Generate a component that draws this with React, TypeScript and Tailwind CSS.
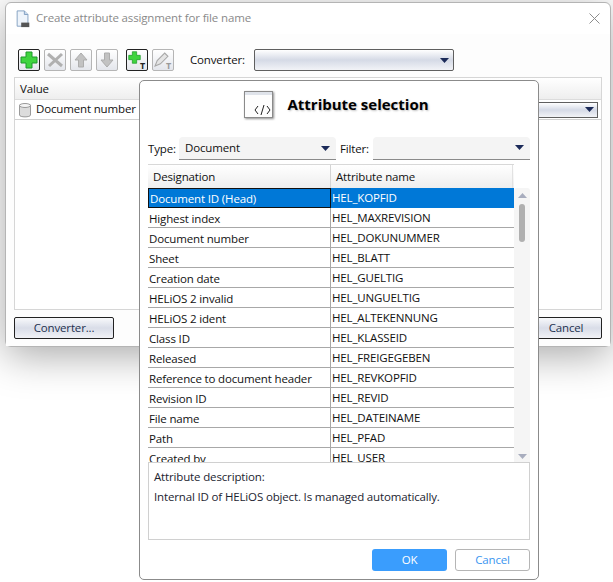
const rows = [
  ["Document ID (Head)", "HEL_KOPFID"],
  ["Highest index", "HEL_MAXREVISION"],
  ["Document number", "HEL_DOKUNUMMER"],
  ["Sheet", "HEL_BLATT"],
  ["Creation date", "HEL_GUELTIG"],
  ["HELiOS 2 invalid", "HEL_UNGUELTIG"],
  ["HELiOS 2 ident", "HEL_ALTEKENNUNG"],
  ["Class ID", "HEL_KLASSEID"],
  ["Released", "HEL_FREIGEGEBEN"],
  ["Reference to document header", "HEL_REVKOPFID"],
  ["Revision ID", "HEL_REVID"],
  ["File name", "HEL_DATEINAME"],
  ["Path", "HEL_PFAD"],
  ["Created by", "HEL_USER"],
]

function Caret({ className = "" }: { className?: string }) {
  return (
    <svg width="9" height="5" viewBox="0 0 9 5" className={className}>
      <path d="M0 0h9L4.5 5z" fill="#1c2b59" />
    </svg>
  )
}

function ToolButton({ active, children }: { active?: boolean; children: React.ReactNode }) {
  return (
    <div
      className={`flex h-[22px] w-[22px] items-center justify-center rounded-[2px] border bg-gradient-to-b from-white to-[#e4e6ec] ${
        active ? "border-[#222]" : "border-[#b5b5b5]"
      }`}
    >
      {children}
    </div>
  )
}

function Plus({ size = 18 }: { size?: number }) {
  return (
    <svg width={size} height={size} viewBox="0 0 18 18">
      <path d="M6 1h6v5h5v6h-5v5H6v-5H1V6h5z" fill="#3fd43f" stroke="#1d9a2a" strokeWidth="1" />
    </svg>
  )
}

function Arrow({ up }: { up?: boolean }) {
  return (
    <svg width="14" height="16" viewBox="0 0 14 16" className={up ? "" : "rotate-180"}>
      <path d="M7 1l6 7H9.500v7h-5V8H1z" fill="#c2c2c2" stroke="#adadad" />
    </svg>
  )
}

export default function App() {
  return (
    <div className="relative h-[582px] w-[613px] overflow-hidden bg-white font-['Open_Sans',sans-serif] text-[11.5px] tracking-[-0.15px] text-[#111]">
      {/* BACK WINDOW */}
      <div className="ml-[5px] mt-[2px] flex h-[345px] w-[606px] flex-col rounded-[6px] border border-[#b4b4b4] bg-white shadow-[0_8px_40px_rgba(0,0,0,0.35)]">
        <div className="flex h-[31px] shrink-0 items-center pl-[9px] pr-[10px]">
          <svg width="16" height="18" viewBox="0 0 16 20">
            <path d="M1.500 1h8l4 4v13h-12z" fill="#eef4fb" stroke="#7d9cc0" />
            <path d="M9.500 1v4h4" fill="#c8d9ec" stroke="#7d9cc0" />
            <rect x="6" y="14" width="9" height="5" fill="#555" />
          </svg>
          <span className="mb-[2px] ml-[5px] text-[#8a8a8a]">Create attribute assignment for file name</span>
          <svg width="11" height="11" viewBox="0 0 11 11" className="ml-auto">
            <path d="M.5.500l10 10M10.500.500l-10 10" stroke="#8d8d8d" />
          </svg>
        </div>

        <div className="flex flex-1 flex-col bg-[#fdfdfd] px-[8px]">
          <div className="flex h-[43px] shrink-0 items-center pb-[6px] pl-[4px] pt-[15px]">
            <ToolButton active><Plus /></ToolButton>
            <div className="ml-[4px]">
              <ToolButton>
                <svg width="18" height="16" viewBox="0 0 18 16">
                  <path d="M2 2l14 12M16 2L3 14" stroke="#b0b0b0" strokeWidth="3" fill="none" />
                </svg>
              </ToolButton>
            </div>
            <div className="ml-[4px]"><ToolButton><Arrow up /></ToolButton></div>
            <div className="ml-[4px]"><ToolButton><Arrow /></ToolButton></div>
            <div className="relative ml-[8px]">
              <ToolButton active>
                <div className="-ml-[5px] -mt-[5px]"><Plus size={13} /></div>
              </ToolButton>
              <span className="absolute bottom-[1px] right-[3px] text-[9px] font-bold leading-none text-[#222]">T</span>
            </div>
            <div className="relative ml-[4px]">
              <ToolButton>
                <svg width="15" height="15" viewBox="0 0 14 14" className="-ml-[3px] -mt-[2px]">
                  <path d="M1 13l2-5 7-7 3 3-7 7z" fill="#e5e5e5" stroke="#a8a8a8" />
                </svg>
              </ToolButton>
              <span className="absolute bottom-[1px] right-[3px] text-[9px] font-bold leading-none text-[#999]">T</span>
            </div>
            <span className="ml-[16px] w-[55px]">Converter:</span>
            <div className="ml-[9px] flex h-[22px] w-[200px] items-center justify-end rounded-[2px] border border-[#5f5f5f] bg-gradient-to-b from-white via-[#d5dae6] to-[#f2f3f7] pr-[4px]">
              <Caret />
            </div>
          </div>

          <div className="flex min-h-0 flex-1 flex-col border border-[#d6d6d6] bg-white">
            <div className="flex h-[22px] shrink-0 items-center border-b border-[#dcdcdc] bg-gradient-to-b from-white to-[#eeeeee] pl-[5px]">Value</div>
            <div className="flex h-[20px] shrink-0 items-center border-b border-[#d0d0d0] pl-[3px]">
              <svg width="14" height="16" viewBox="0 0 14 16">
                <path d="M1.500 3v10c0 2.500 11 2.500 11 0V3z" fill="#dcdcdc" stroke="#9a9a9a" />
                <ellipse cx="7" cy="3.500" rx="5.500" ry="2" fill="#f4f4f4" stroke="#9a9a9a" />
              </svg>
              <span className="mb-[2px] ml-[4px]">Document number</span>
              <div className="ml-auto mr-[3px] flex h-[16px] w-[60px] items-center justify-end border border-[#5f5f5f] bg-gradient-to-b from-white via-[#d5dae6] to-[#f2f3f7] pr-[3px]">
                <Caret />
              </div>
            </div>
          </div>

          <div className="flex h-[36px] shrink-0 items-center justify-between">
            <div className="flex h-[22px] w-[100px] items-center justify-center rounded-[2px] border border-[#222] bg-gradient-to-b from-[#f8f9fb] via-[#d9dde8] to-[#f1f2f6] text-[#23314f]">Converter...</div>
            <div className="flex h-[22px] w-[72px] items-center justify-center rounded-[2px] border border-[#222] bg-gradient-to-b from-[#f8f9fb] via-[#d9dde8] to-[#f1f2f6] text-[#23314f]">Cancel</div>
          </div>
        </div>
      </div>

      {/* ATTRIBUTE SELECTION DIALOG */}
      <div className="absolute left-[139px] top-[80px] flex h-[500px] w-[400px] flex-col rounded-[5px] border border-[#8b8b8b] bg-white px-[8px]">
        <div className="flex h-[48px] shrink-0 items-center justify-center">
          <svg width="32" height="30" viewBox="0 0 32 30" className="ml-[-6px] drop-shadow-[1px_1px_1px_rgba(0,0,0,0.45)]">
            <rect x="1.500" y="1.500" width="28" height="26" fill="#fdfdfd" stroke="#8a8a8a" />
            <rect x="2" y="2" width="27" height="3" fill="#dfe3ea" />
            <path d="M15 16l-3 4 3 4M24 16l3 4-3 4M21 15l-3 10" fill="none" stroke="#222" strokeWidth="1" />
          </svg>
          <h1 className="mb-[1px] ml-[12px] text-[15px] font-bold tracking-normal text-black [text-shadow:1px_1px_2px_rgba(0,0,0,0.25)]">Attribute selection</h1>
        </div>

        <div className="mt-[8px] flex h-[23px] shrink-0 items-center">
          <span className="w-[31px]">Type:</span>
          <div className="flex h-[23px] w-[157px] items-center justify-between rounded-t-[4px] border-b border-[#8a8a8a] bg-[#f4f4f4] pl-[6px] pr-[6px]">
            Document <Caret />
          </div>
          <span className="ml-[4px] w-[33px]">Filter:</span>
          <div className="flex h-[23px] w-[157px] items-center justify-end rounded-t-[4px] border-b border-[#8a8a8a] bg-[#f4f4f4] pb-[2px] pr-[6px]">
            <Caret />
          </div>
        </div>

        <div className="mt-[4px] flex min-h-0 flex-1 flex-col">
          <div className="flex h-[24px] w-[366px] shrink-0 items-center border-t border-[#d8d8d8] bg-gradient-to-b from-white to-[#eeeeee]">
            <div className="flex h-full w-[183px] items-center border-r border-[#d4d4d4] pl-[5px]">Designation</div>
            <div className="flex h-full w-[182px] items-center border-r border-[#e2e2e2] pl-[5px]">Attribute name</div>
          </div>
          <div className="flex min-h-0 flex-1">
            <div className="min-h-0 w-[366px] overflow-hidden">
              {rows.map((r, i) => (
                <div key={r[1]} className="flex h-[20px] w-[366px]">
                  <div
                    className={`flex w-[183px] items-center whitespace-nowrap pl-[1px] pt-[2px] ${
                      i === 0 ? "border border-[#111] bg-[#0078d7] text-white" : "border-b border-r border-[#a8a8a8]"
                    }`}
                  >
                    {r[0]}
                  </div>
                  <div
                    className={`flex w-[183px] items-center pl-[1px] ${
                      i === 0 ? "bg-[#0078d7] text-white" : "border-b border-[#a8a8a8]"
                    }`}
                  >
                    {r[1]}
                  </div>
                </div>
              ))}
            </div>
            <div className="flex w-[16px] flex-col items-center rounded-t-[3px] bg-[#f5f5f5] pt-[5px]">
              <Caret className="rotate-180 opacity-35" />
              <div className="mt-[6px] h-[38px] w-[6px] rounded-full bg-[#b0b0b0]" />
              <Caret className="mb-[3px] mt-auto opacity-35" />
            </div>
          </div>
          <div className="h-[78px] w-[382px] shrink-0 border border-[#d0d0d0] bg-white px-[5px] pt-[4px]">
            <p className="leading-[20px] text-[#1c2430]">Attribute description:</p>
            <p className="leading-[20px] text-[#1c2430]">Internal ID of HELiOS object. Is managed automatically.</p>
          </div>
        </div>

        <div className="flex h-[39px] shrink-0 items-center justify-end gap-[8px]">
          <div className="flex h-[22px] w-[75px] items-center justify-center rounded-[3px] bg-[#3a9dfd] text-white">OK</div>
          <div className="flex h-[22px] w-[75px] items-center justify-center rounded-[3px] border border-[#b5b5b5] bg-white text-[#3a96f0]">Cancel</div>
        </div>
      </div>
    </div>
  )
}
